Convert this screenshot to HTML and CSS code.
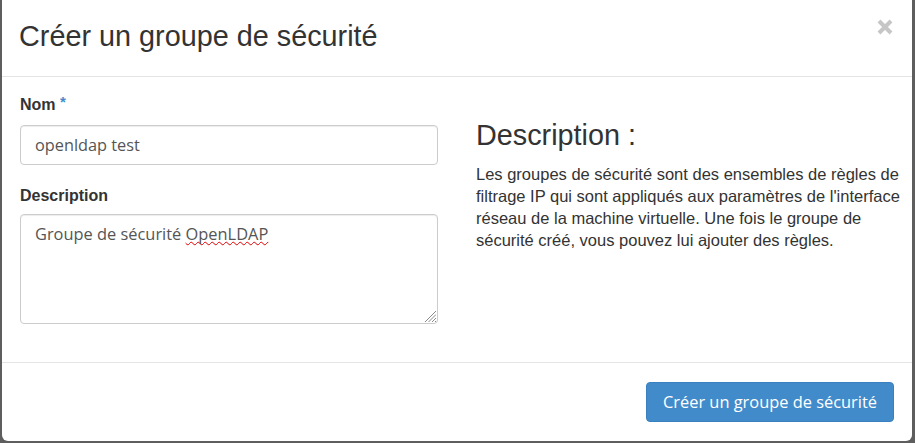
FILE: index.html
```html
<!DOCTYPE html>
<html lang="fr">
<head>
<meta charset="utf-8">
<title>Créer un groupe de sécurité</title>
<link rel="stylesheet" href="styles.css">
</head>
<body>
<div class="backdrop">
  <div class="modal">
    <div class="modal-header">
      <h3 class="modal-title">Créer un groupe de sécurité</h3>
      <button class="close" type="button" aria-label="Fermer">
        <svg width="16" height="16" viewBox="0 0 16 16"><path d="M2 2 L14 14 M14 2 L2 14" stroke="#c6c6c6" stroke-width="4" stroke-linecap="butt" fill="none"/></svg>
      </button>
    </div>
    <div class="modal-body">
      <form class="form-col">
        <div class="form-group">
          <label class="control-label first">Nom <span class="req">*</span></label>
          <input class="form-control" type="text" value="openldap test">
        </div>
        <div class="form-group">
          <label class="control-label">Description</label>
          <div class="form-control textarea">Groupe de sécurité <span class="spell">OpenLDAP</span><svg class="grip" width="12" height="12" viewBox="0 0 12 12"><path d="M12 1 L1 12 M12 4.5 L4.5 12 M12 8 L8 12 M12 11 L11 12" stroke="#8a8a8a" stroke-width="1" fill="none"/></svg></div>
        </div>
      </form>
      <div class="help-col">
        <h3 class="help-title">Description :</h3>
        <p class="help-text">Les groupes de sécurité sont des ensembles de règles de filtrage IP qui sont appliqués aux paramètres de l'interface réseau de la machine virtuelle. Une fois le groupe de sécurité créé, vous pouvez lui ajouter des règles.</p>
      </div>
    </div>
    <div class="modal-footer">
      <button class="btn-primary" type="button">Créer un groupe de sécurité</button>
    </div>
  </div>
</div>
</body>
</html>
```
FILE: styles.css
```css
html, body {
  margin: 0;
  padding: 0;
}
body {
  background: #5e5e5e;
  height: 443px;
  overflow: hidden;
  font-family: "Liberation Sans", Arial, sans-serif;
  color: #333;
}
.backdrop {
  padding: 0 3px 0 2px;
}
.modal {
  background: #fff;
  height: 441px;
  border-radius: 0 0 6px 6px;
  display: flex;
  flex-direction: column;
  box-sizing: border-box;
}
.modal-header {
  display: flex;
  justify-content: space-between;
  align-items: flex-start;
  padding: 20px 19px 24px 17px;
  border-bottom: 1px solid #e5e5e5;
}
.modal-title {
  margin: 0;
  font-size: 28.8px;
  line-height: 32px;
  font-weight: 400;
  color: #333;
}
.close {
  margin: -1px 0 0 0;
  padding: 0;
  border: 0;
  background: none;
  width: 16px;
  height: 16px;
  display: block;
}
.close svg {
  display: block;
}
.modal-body {
  display: grid;
  grid-template-columns: 418px 1fr;
  column-gap: 38px;
  padding: 17px 5px 18px 18px;
}
.form-col {
  margin: 0;
}
.form-group {
  margin-bottom: 20px;
}
.control-label {
  display: block;
  font-weight: 700;
  font-size: 16px;
  line-height: 22px;
  margin-bottom: 7px;
  color: #333;
}
.control-label.first {
  margin-bottom: 9px;
}
.req {
  color: #428bca;
  font-size: 15px;
  line-height: 15px;
  vertical-align: top;
}
.form-control {
  display: block;
  width: 100%;
  box-sizing: border-box;
  height: 40px;
  margin: 0;
  padding: 8px 14px;
  border: 1px solid #ccc;
  border-radius: 4px;
  background: #fff;
  font-family: "Open Sans", "Noto Sans", sans-serif;
  font-size: 16.3px;
  line-height: 22px;
  color: #555;
  box-shadow: inset 0 1px 1px rgba(0, 0, 0, 0.075);
  outline: none;
}
.textarea {
  height: 110px;
  position: relative;
  font-size: 16.4px;
}
.spell {
  text-decoration: underline wavy #e00000;
  text-decoration-thickness: 1px;
  text-decoration-skip-ink: none;
}
.grip {
  position: absolute;
  right: 1px;
  bottom: 1px;
  display: block;
}
.help-title {
  margin: 25px 0 12px;
  font-size: 28.8px;
  line-height: 32px;
  font-weight: 400;
  color: #333;
}
.help-text {
  margin: 0;
  font-size: 16.5px;
  line-height: 22px;
  color: #333;
}
.modal-footer {
  margin-top: auto;
  border-top: 1px solid #e5e5e5;
  padding: 19px 18px 19px;
  display: flex;
  justify-content: flex-end;
}
.btn-primary {
  height: 40px;
  box-sizing: border-box;
  padding: 8px 16px;
  border: 1px solid #3a80bf;
  border-radius: 4px;
  background: #428bca;
  color: #fff;
  font-family: "Open Sans", "Noto Sans", sans-serif;
  font-size: 16.4px;
  line-height: 22px;
}
```
